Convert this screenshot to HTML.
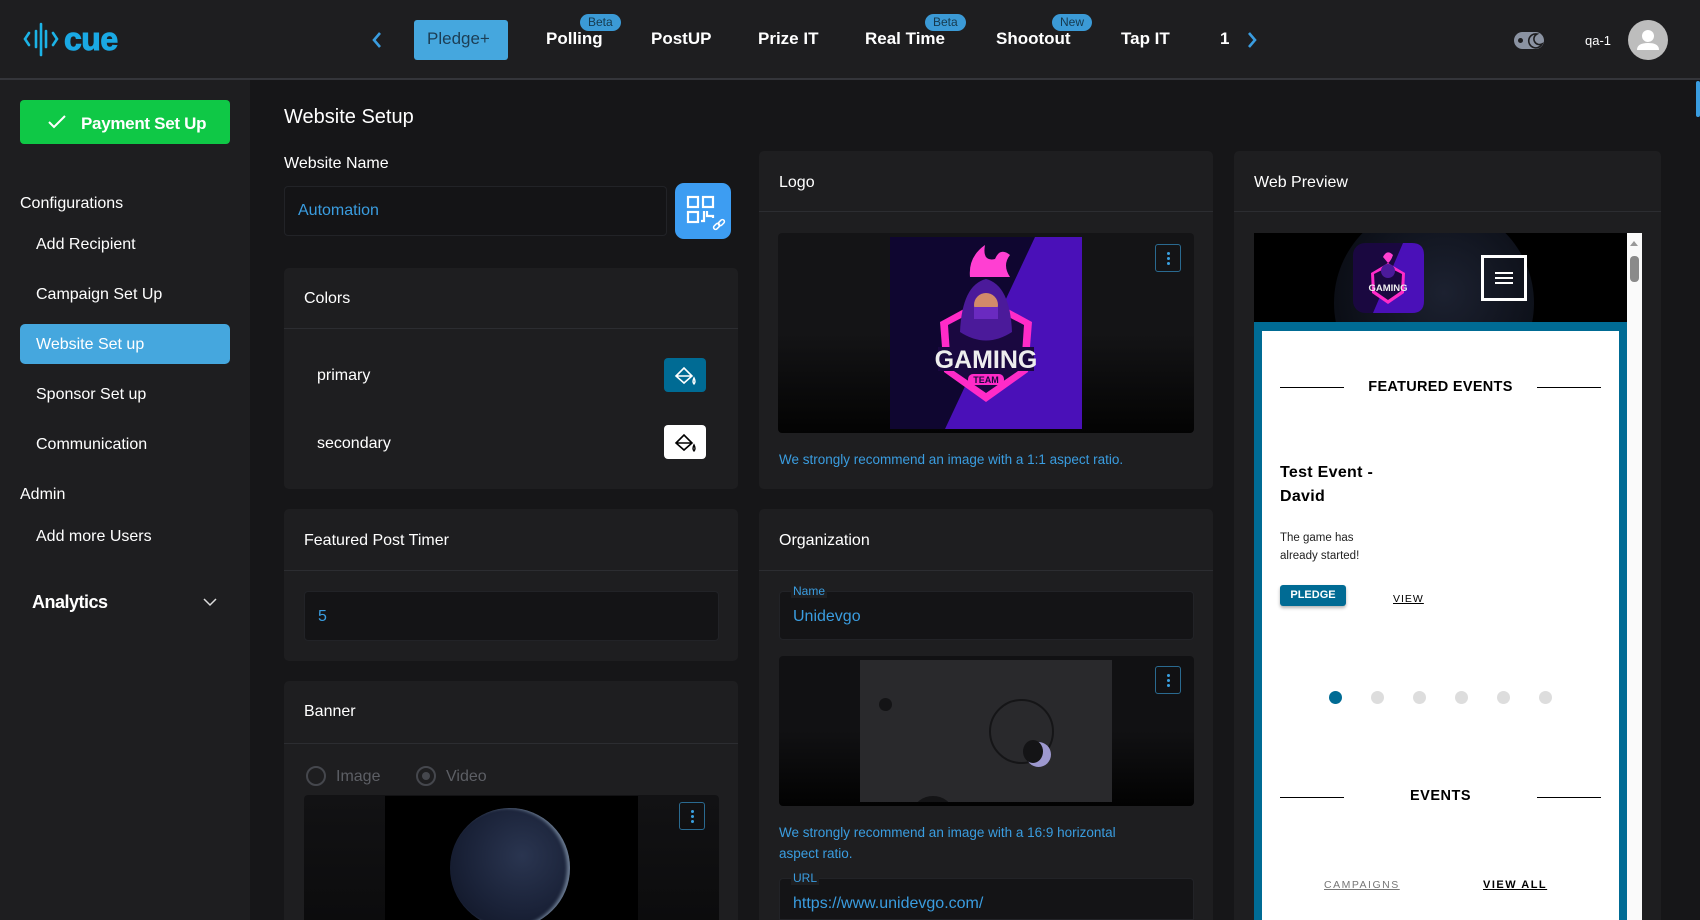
<!DOCTYPE html>
<html style="width:1700px;height:920px;overflow:hidden"><head><meta charset="utf-8"><style>
*{box-sizing:border-box;margin:0;padding:0}
body{width:1700px;height:920px;overflow:hidden;background:#161618;font-family:"Liberation Sans",sans-serif;color:#fff;position:relative}
.a{position:absolute}
.hdr{left:0;top:0;width:1700px;height:80px;background:#1e1e20;border-bottom:2px solid #34353a}
.nav{top:29px;font-size:17px;font-weight:bold;color:#fff;white-space:nowrap}
.badge{top:14px;height:17px;border-radius:9px;background:#3b9ad6;color:#16394d;font-size:12px;line-height:17px;padding:0 8px}
.side{left:0;top:80px;width:250px;height:840px;background:#1e1e20}
.si{left:36px;font-size:16px;color:#fff}
.card{background:#1e1e20;border-radius:5px}
.ch{font-size:16px;color:#fff}
.div{height:1px;background:#2c2d31}
.inp{background:#141416;border:1px solid #222327;border-radius:4px}
.blue{color:#3a9de0}
.kebab{width:26px;height:28px;border:1px solid #2a6a90;border-radius:3px}
.kebab i{position:absolute;left:11px;width:3px;height:3px;border-radius:50%;background:#3aa0e0}
</style></head><body>

<div class="a hdr"></div>
<svg class="a" style="left:22px;top:22px" width="110" height="36" viewBox="0 0 110 36">
<g stroke="#1cb3e6" stroke-width="2.6" fill="none" stroke-linecap="round">
<polyline points="7,11 3,17 7,23"/><polyline points="31,11 35,17 31,23"/>
<line x1="14" y1="9" x2="14" y2="25"/><line x1="19" y1="2" x2="19" y2="33"/><line x1="24" y1="9" x2="24" y2="25"/>
</g>
<text x="42" y="28" font-family="Liberation Sans" font-weight="bold" font-size="32" fill="#1aa9e4" stroke="#1aa9e4" stroke-width="1" letter-spacing="-0.5">cue</text>
</svg>

<svg class="a" style="left:370px;top:31px" width="14" height="18"><polyline points="10,2 4,9 10,16" stroke="#3a9de0" stroke-width="2.6" fill="none"/></svg>
<div class="a" style="left:414px;top:20px;width:94px;height:40px;background:#45a7de;border-radius:3px"></div>
<div class="a nav" style="left:427px;color:#1c3e55;font-weight:normal">Pledge+</div>
<div class="a nav" style="left:546px">Polling</div>
<div class="a badge" style="left:580px">Beta</div>
<div class="a nav" style="left:651px">PostUP</div>
<div class="a nav" style="left:758px">Prize IT</div>
<div class="a nav" style="left:865px">Real Time</div>
<div class="a badge" style="left:925px">Beta</div>
<div class="a nav" style="left:996px">Shootout</div>
<div class="a badge" style="left:1052px">New</div>
<div class="a nav" style="left:1121px">Tap IT</div>
<div class="a nav" style="left:1220px">1</div>
<svg class="a" style="left:1245px;top:31px" width="14" height="18"><polyline points="4,2 10,9 4,16" stroke="#3a9de0" stroke-width="2.6" fill="none"/></svg>

<div class="a" style="left:1514px;top:32px;width:30px;height:17px;border-radius:9px;background:#8b93a2"></div>
<div class="a" style="left:1518px;top:38px;width:5px;height:5px;border-radius:50%;background:#1e1e20"></div>
<svg class="a" style="left:1527px;top:32px" width="17" height="17"><path d="M10 2 A7 7 0 1 0 15 12 A5.5 5.5 0 0 1 10 2Z" fill="none" stroke="#1e1e20" stroke-width="1.6"/></svg>
<div class="a" style="left:1585px;top:33px;font-size:13px;color:#fff">qa-1</div>
<div class="a" style="left:1628px;top:20px;width:40px;height:40px;border-radius:50%;background:#bdbdbd"></div>
<svg class="a" style="left:1628px;top:20px" width="40" height="40"><circle cx="20" cy="16" r="6" fill="#fff"/><path d="M9 30 Q9 23 20 23 Q31 23 31 30Z" fill="#fff"/></svg>

<div class="a side"></div>
<div class="a" style="left:20px;top:100px;width:210px;height:44px;background:#0fc846;border-radius:4px"></div>
<svg class="a" style="left:47px;top:114px" width="20" height="16"><polyline points="2,8 7,13 18,2" stroke="#fff" stroke-width="2" fill="none"/></svg>
<div class="a" style="left:81px;top:114px;font-size:17px;font-weight:bold;letter-spacing:-0.3px">Payment Set Up</div>
<div class="a si" style="left:20px;top:195px">Configurations</div>
<div class="a si" style="top:236px">Add Recipient</div>
<div class="a si" style="top:286px">Campaign Set Up</div>
<div class="a" style="left:20px;top:324px;width:210px;height:40px;background:#45a7de;border-radius:5px"></div>
<div class="a si" style="top:336px">Website Set up</div>
<div class="a si" style="top:386px">Sponsor Set up</div>
<div class="a si" style="top:436px">Communication</div>
<div class="a si" style="left:20px;top:486px">Admin</div>
<div class="a si" style="top:528px">Add more Users</div>
<div class="a" style="left:32px;top:592px;font-size:18px;font-weight:bold;letter-spacing:-0.5px">Analytics</div>
<svg class="a" style="left:203px;top:597px" width="14" height="10"><polyline points="1,2 7,8 13,2" stroke="#ddd" stroke-width="1.5" fill="none"/></svg>

<div class="a" style="left:1696px;top:81px;width:4px;height:36px;background:#3a9de0;border-radius:2px"></div>

<div class="a" style="left:284px;top:106px;font-size:20px">Website Setup</div>
<div class="a" style="left:284px;top:155px;font-size:16px">Website Name</div>
<div class="a inp" style="left:284px;top:186px;width:383px;height:50px"></div>
<div class="a blue" style="left:298px;top:202px;font-size:16px">Automation</div>
<div class="a" style="left:675px;top:183px;width:56px;height:56px;background:#3d9df2;border-radius:9px"></div>
<svg class="a" style="left:675px;top:183px" width="56" height="56"><g fill="none" stroke="#fff" stroke-width="2.2">
<rect x="13" y="14" width="10" height="10"/><rect x="28" y="14" width="10" height="10"/><rect x="13" y="29" width="10" height="10"/>
<path d="M29 28 V38 H26 M32 28 V33 H38 V35"/></g>
<g fill="none" stroke="#fff" stroke-width="1.5"><rect x="40" y="40" width="4" height="7" rx="2" transform="rotate(45 42 43)"/><rect x="44" y="36" width="4" height="7" rx="2" transform="rotate(45 46 40)"/></g></svg>

<div class="a card" style="left:284px;top:268px;width:454px;height:221px"></div>
<div class="a ch" style="left:304px;top:290px">Colors</div>
<div class="a div" style="left:284px;top:328px;width:454px"></div>
<div class="a ch" style="left:317px;top:367px">primary</div>
<div class="a ch" style="left:317px;top:435px">secondary</div>
<div class="a" style="left:664px;top:358px;width:42px;height:34px;background:#006b94;border-radius:4px"></div>
<div class="a" style="left:664px;top:425px;width:42px;height:34px;background:#fff;border-radius:4px"></div>
<svg class="a" style="left:664px;top:358px" width="42" height="34"><path d="M12 18 L20 10 L28 18 L20 25Z M12 18 H28" fill="none" stroke="#fff" stroke-width="1.6"/><path d="M30 20 Q28 24 30 26 Q32 24 30 20Z" fill="none" stroke="#fff" stroke-width="1.4"/></svg>
<svg class="a" style="left:664px;top:425px" width="42" height="34"><path d="M12 18 L20 10 L28 18 L20 25Z M12 18 H28" fill="none" stroke="#000" stroke-width="1.6"/><path d="M30 20 Q28 24 30 26 Q32 24 30 20Z" fill="none" stroke="#000" stroke-width="1.4"/></svg>

<div class="a card" style="left:284px;top:509px;width:454px;height:152px"></div>
<div class="a ch" style="left:304px;top:532px">Featured Post Timer</div>
<div class="a div" style="left:284px;top:570px;width:454px"></div>
<div class="a inp" style="left:304px;top:591px;width:415px;height:50px"></div>
<div class="a blue" style="left:318px;top:608px;font-size:16px">5</div>

<div class="a card" style="left:284px;top:681px;width:454px;height:239px;border-radius:5px 5px 0 0"></div>
<div class="a ch" style="left:304px;top:703px">Banner</div>
<div class="a div" style="left:284px;top:743px;width:454px"></div>
<div class="a" style="left:306px;top:766px;width:20px;height:20px;border:2px solid #45474d;border-radius:50%"></div>
<div class="a" style="left:336px;top:768px;font-size:16px;color:#5d5f65">Image</div>
<div class="a" style="left:416px;top:766px;width:20px;height:20px;border:2px solid #45474d;border-radius:50%"></div>
<div class="a" style="left:422px;top:772px;width:8px;height:8px;background:#45474d;border-radius:50%"></div>
<div class="a" style="left:446px;top:768px;font-size:16px;color:#5d5f65">Video</div>
<div class="a" style="left:304px;top:795px;width:415px;height:125px;background:linear-gradient(#121214,#0c0c0d);border-radius:4px 4px 0 0;overflow:hidden">
<div class="a" style="left:81px;top:1px;width:253px;height:124px;background:#000;overflow:hidden">
<div class="a" style="left:65px;top:12px;width:120px;height:120px;border-radius:50%;background:radial-gradient(circle at 60% 40%,#2a3550,#1a2238 55%,#0e1322);box-shadow:-3px 0 3px #6a7a90 inset"></div>
</div></div>
<div class="a kebab" style="left:679px;top:802px"><i style="top:7px"></i><i style="top:12px"></i><i style="top:17px"></i></div>

<div class="a card" style="left:759px;top:151px;width:454px;height:338px"></div>
<div class="a ch" style="left:779px;top:174px">Logo</div>
<div class="a div" style="left:759px;top:211px;width:454px"></div>
<div class="a" style="left:778px;top:233px;width:416px;height:200px;background:linear-gradient(#141416 50%,#030303);border-radius:4px"></div>
<svg class="a" style="left:890px;top:237px" width="192" height="192" viewBox="0 0 192 192">
<rect width="192" height="192" fill="#0f0630"/>
<polygon points="145,0 192,0 192,192 55,192" fill="#4a10b8"/>
<path d="M80 40 Q78 20 95 8 Q92 25 105 22 Q110 10 120 18 Q112 28 120 40 Z" fill="#ff3fd2"/>
<path d="M50 85 L96 60 L142 85 L138 135 L96 165 L54 135Z" fill="#ff2bc8"/>
<path d="M58 88 L96 68 L134 88 L131 132 L96 156 L61 132Z" fill="#1a0840"/>
<path d="M70 95 Q72 48 96 42 Q120 48 122 95 Q96 112 70 95Z" fill="#4b1a9a"/>
<circle cx="96" cy="68" r="12" fill="#d38a6a"/><rect x="84" y="70" width="24" height="12" fill="#6a2ac0"/>
<rect x="48" y="110" width="96" height="24" fill="#1a0840"/>
<text x="96" y="131" text-anchor="middle" font-family="Liberation Sans" font-weight="bold" font-size="25" fill="#eee">GAMING</text>
<rect x="78" y="137" width="36" height="11" rx="5" fill="#ff2bc8"/>
<text x="96" y="146" text-anchor="middle" font-family="Liberation Sans" font-weight="bold" font-size="9" fill="#1a0840">TEAM</text>
</svg>
<div class="a kebab" style="left:1155px;top:244px"><i style="top:7px"></i><i style="top:12px"></i><i style="top:17px"></i></div>
<div class="a blue" style="left:779px;top:452px;font-size:13.5px">We strongly recommend an image with a 1:1 aspect ratio.</div>

<div class="a card" style="left:759px;top:509px;width:454px;height:411px;border-radius:5px 5px 0 0"></div>
<div class="a ch" style="left:779px;top:532px">Organization</div>
<div class="a div" style="left:759px;top:570px;width:454px"></div>
<div class="a inp" style="left:779px;top:591px;width:415px;height:49px"></div>
<div class="a" style="left:791px;top:584px;font-size:12px;color:#3a9de0;background:#1e1e20;padding:0 2px">Name</div>
<div class="a blue" style="left:793px;top:608px;font-size:16px">Unidevgo</div>
<div class="a" style="left:779px;top:656px;width:415px;height:150px;background:linear-gradient(#111113 50%,#020202);border-radius:4px"></div>
<div class="a" style="left:860px;top:660px;width:252px;height:142px;background:#29292c;overflow:hidden">
<div class="a" style="left:19px;top:38px;width:13px;height:13px;border-radius:50%;background:#141416"></div>
<div class="a" style="left:129px;top:39px;width:65px;height:65px;border-radius:50%;border:2px solid #151517"></div>
<div class="a" style="left:166px;top:82px;width:25px;height:25px;border-radius:50%;background:#9d98cf"></div>
<div class="a" style="left:163px;top:80px;width:20px;height:23px;border-radius:50%;background:#141416"></div>
<div class="a" style="left:54px;top:136px;width:38px;height:30px;border-radius:50%;background:#141416"></div>
</div>
<div class="a kebab" style="left:1155px;top:666px"><i style="top:7px"></i><i style="top:12px"></i><i style="top:17px"></i></div>
<div class="a blue" style="left:779px;top:822px;font-size:13.5px;line-height:21px">We strongly recommend an image with a 16:9 horizontal<br>aspect ratio.</div>
<div class="a inp" style="left:779px;top:878px;width:415px;height:42px;border-radius:4px 4px 0 0"></div>
<div class="a" style="left:791px;top:871px;font-size:12px;color:#3a9de0;background:#1e1e20;padding:0 2px">URL</div>
<div class="a blue" style="left:793px;top:895px;font-size:16px">https://www.unidevgo.com/</div>

<div class="a card" style="left:1234px;top:151px;width:427px;height:769px;border-radius:5px 5px 0 0"></div>
<div class="a ch" style="left:1254px;top:174px">Web Preview</div>
<div class="a div" style="left:1234px;top:211px;width:427px"></div>
<div class="a" style="left:1254px;top:233px;width:373px;height:90px;background:#000;overflow:hidden">
<div class="a" style="left:80px;top:-30px;width:200px;height:200px;border-radius:50%;background:radial-gradient(circle at 55% 45%,#1c2130,#0b0e16 70%)"></div>
</div>
<svg class="a" style="left:1353px;top:243px" width="71" height="70" viewBox="0 0 71 70">
<rect width="71" height="70" rx="12" fill="#1a0840"/><path d="M50 0 H59 Q71 0 71 12 V58 Q71 70 59 70 H20Z" fill="#4a10b8"/>
<path d="M18 30 L35 20 L52 30 L51 50 L35 61 L19 50Z" fill="#ff2bc8"/><path d="M21 31 L35 24 L49 31 L48 48 L35 57 L22 48Z" fill="#1a0840"/>
<circle cx="35" cy="28" r="7" fill="#4b1a9a"/><path d="M30 14 Q34 6 40 12 Q38 18 35 20Z" fill="#ff3fd2"/>
<text x="35" y="48" text-anchor="middle" font-family="Liberation Sans" font-weight="bold" font-size="9.5" fill="#eee">GAMING</text></svg>
<div class="a" style="left:1481px;top:255px;width:46px;height:46px;border:3px solid #fff"></div>
<div class="a" style="left:1495px;top:272px;width:18px;height:2px;background:#fff;box-shadow:0 5px 0 #fff,0 10px 0 #fff"></div>
<div class="a" style="left:1627px;top:233px;width:15px;height:687px;background:#fafafa"></div>
<div class="a" style="left:1630px;top:241px;width:0;height:0;border-left:4px solid transparent;border-right:4px solid transparent;border-bottom:5px solid #999"></div>
<div class="a" style="left:1630px;top:256px;width:9px;height:26px;border-radius:4px;background:#8a8a8a"></div>
<div class="a" style="left:1254px;top:322px;width:373px;height:598px;background:#006b94"></div>
<div class="a" style="left:1262px;top:331px;width:357px;height:589px;background:#fff;color:#000;overflow:hidden">
<div class="a" style="left:18px;top:56px;width:64px;height:1px;background:#000"></div>
<div class="a" style="left:275px;top:56px;width:64px;height:1px;background:#000"></div>
<div class="a" style="left:0;width:357px;top:48px;text-align:center;font-size:14.5px;font-weight:bold;letter-spacing:0.3px">FEATURED EVENTS</div>
<div class="a" style="left:18px;top:130px;font-size:16px;font-weight:bold;line-height:24px;letter-spacing:0.3px">Test Event -<br>David</div>
<div class="a" style="left:18px;top:198px;font-size:11.5px;line-height:18px;color:#222">The game has<br>already started!</div>
<div class="a" style="left:18px;top:254px;width:66px;height:21px;background:#006b94;border-radius:3px;color:#fff;font-size:11px;font-weight:bold;text-align:center;line-height:21px;box-shadow:0 2px 3px rgba(0,0,0,.3)">PLEDGE</div>
<div class="a" style="left:131px;top:262px;font-size:10.5px;text-decoration:underline;letter-spacing:1px">VIEW</div>
<div class="a" style="left:67px;top:360px;width:13px;height:13px;border-radius:50%;background:#006b94"></div>
<div class="a" style="left:109px;top:360px;width:13px;height:13px;border-radius:50%;background:#ddd"></div>
<div class="a" style="left:151px;top:360px;width:13px;height:13px;border-radius:50%;background:#ddd"></div>
<div class="a" style="left:193px;top:360px;width:13px;height:13px;border-radius:50%;background:#ddd"></div>
<div class="a" style="left:235px;top:360px;width:13px;height:13px;border-radius:50%;background:#ddd"></div>
<div class="a" style="left:277px;top:360px;width:13px;height:13px;border-radius:50%;background:#ddd"></div>
<div class="a" style="left:18px;top:466px;width:64px;height:1px;background:#000"></div>
<div class="a" style="left:275px;top:466px;width:64px;height:1px;background:#000"></div>
<div class="a" style="left:0;width:357px;top:457px;text-align:center;font-size:14.5px;font-weight:bold;letter-spacing:0.5px">EVENTS</div>
<div class="a" style="left:62px;top:548px;font-size:10.5px;text-decoration:underline;letter-spacing:1.5px;color:#777">CAMPAIGNS</div>
<div class="a" style="left:221px;top:548px;font-size:11px;font-weight:bold;text-decoration:underline;letter-spacing:1.5px">VIEW ALL</div>
</div>
</body></html>
